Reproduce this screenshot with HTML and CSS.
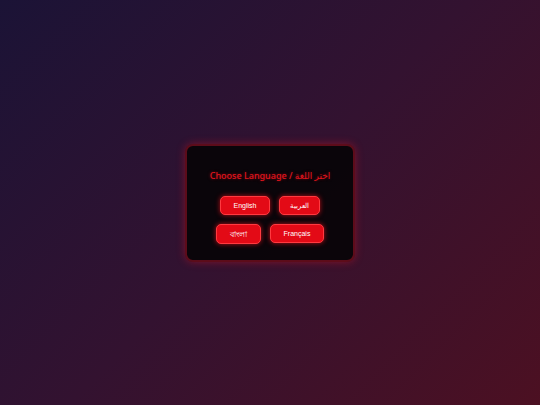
FILE: index.html
```html
<!DOCTYPE html>
<html lang="en">
<head>
<meta charset="utf-8">
<title>Choose Language</title>
<link rel="stylesheet" href="styles.css">
</head>
<body>
<main class="page">
  <section class="card">
    <h1 class="title">Choose Language / اختر اللغة</h1>
    <div class="langs">
      <button class="lang">English</button>
      <button class="lang lang-ar" lang="ar">العربية</button>
      <button class="lang lang-bn" lang="bn">বাংলা</button>
      <button class="lang">Français</button>
    </div>
  </section>
</main>
</body>
</html>
```
FILE: styles.css
```css
html, body {
  margin: 0;
  padding: 0;
  height: 100%;
}
body {
  background: linear-gradient(135deg, #1b1336 0%, #331230 50%, #4c1022 100%);
  font-family: "Noto Sans", "DejaVu Sans", sans-serif;
}
.page {
  width: 540px;
  height: 405px;
  display: flex;
  align-items: center;
  justify-content: center;
}
.card {
  width: 170px;
  height: 118px;
  box-sizing: border-box;
  background: rgba(8, 4, 8, 0.93);
  border: 2px solid rgba(160, 20, 40, 0.55);
  border-radius: 8px;
  box-shadow: 0 0 8px rgba(220, 20, 40, 0.45);
  display: flex;
  flex-direction: column;
  align-items: center;
  padding-top: 23px;
}
.title {
  margin: 0 0 13px 0;
  font-size: 9px;
  font-weight: 500;
  line-height: 14px;
  color: #e0141c;
  text-shadow: 0 0 3px rgba(230, 20, 30, 0.5);
  white-space: nowrap;
}
.langs {
  width: 112px;
  display: flex;
  flex-wrap: wrap;
  justify-content: center;
  column-gap: 9px;
  row-gap: 9px;
}
.lang {
  height: 19px;
  padding: 0 13px;
  border: 1px solid #ff3a40;
  border-radius: 5px;
  background: #e30a16;
  color: #fff;
  font-family: "Liberation Sans", Arial, sans-serif;
  font-size: 7px;
  line-height: 17px;
  box-shadow: 0 0 5px rgba(255, 20, 30, 0.7);
  cursor: pointer;
}
.lang-ar {
  padding: 0 10px;
}
.lang-bn {
  height: 20px;
  font-family: "Noto Sans", "DejaVu Sans", sans-serif;
  font-size: 8px;
}
```
